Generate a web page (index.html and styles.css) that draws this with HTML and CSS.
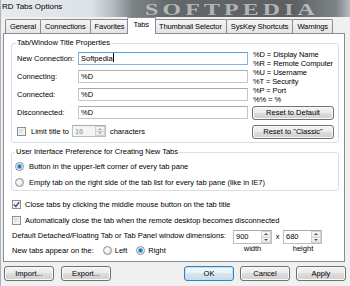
FILE: index.html
```html
<!DOCTYPE html>
<html lang="en">
<head>
    <meta charset="UTF-8">
    <title>RD Tabs Options</title>
    <link rel="stylesheet" href="styles.css">
</head>
<body>
<div class="window">
    <div class="titlebar">
        <span class="title">RD Tabs Options</span>
        <span class="watermark">SOFTPEDIA</span>
    </div>
    <div class="tabs">
        <span class="tab">General</span>
        <span class="tab">Connections</span>
        <span class="tab">Favorites</span>
        <span class="tab current">Tabs</span>
        <span class="tab">Thumbnail Selector</span>
        <span class="tab">SysKey Shortcuts</span>
        <span class="tab">Warnings</span>
    </div>
    <div class="panel">
        <fieldset class="group group-title">
            <legend>Tab/Window Title Properties</legend>
            <div class="title-grid">
                <div class="fields">
                    <div class="field">
                        <label>New Connection:</label>
                        <span class="input focus">Softpedia<i class="caret"></i></span>
                    </div>
                    <div class="field">
                        <label>Connecting:</label>
                        <span class="input">%D</span>
                    </div>
                    <div class="field">
                        <label>Connected:</label>
                        <span class="input">%D</span>
                    </div>
                    <div class="field">
                        <label>Disconnected:</label>
                        <span class="input">%D</span>
                    </div>
                    <div class="limit">
                        <span class="check"></span>
                        <span class="limit-text">Limit title to</span>
                        <span class="spin disabled small">
                            <span class="spin-val">16</span>
                            <span class="spin-btns"><span class="up"></span><span class="down"></span></span>
                        </span>
                        <span class="limit-text">characters</span>
                    </div>
                </div>
                <div class="codes-col">
                    <ul class="codes">
                        <li>%D = Display Name</li>
                        <li>%R = Remote Computer</li>
                        <li>%U = Username</li>
                        <li>%T = Security</li>
                        <li>%P = Port</li>
                        <li>%% = %</li>
                    </ul>
                    <span class="btn wide">Reset to Default</span>
                    <span class="btn wide">Reset to "Classic"</span>
                </div>
            </div>
        </fieldset>

        <fieldset class="group group-pref">
            <legend>User Interface Preference for Creating New Tabs</legend>
            <div class="row"><span class="radio on"></span><span>Button in the upper-left corner of every tab pane</span></div>
            <div class="row"><span class="radio"></span><span>Empty tab on the right side of the tab list for every tab pane (like in IE7)</span></div>
        </fieldset>

        <div class="options">
            <div class="row">
                <span class="check on">
                    <svg width="7" height="7" viewBox="0 0 7 7"><path d="M0.8 3.4 L2.8 5.4 L6.2 1.2" fill="none" stroke="#3c4f8a" stroke-width="1.4"/></svg>
                </span>
                <span>Close tabs by clicking the middle mouse button on the tab title</span>
            </div>
            <div class="row">
                <span class="check"></span>
                <span>Automatically close the tab when the remote desktop becomes disconnected</span>
            </div>
            <div class="dims">
                <span class="dims-text">Default Detached/Floating Tab or Tab Panel window dimensions:</span>
                <span class="spin">
                    <span class="spin-val">900</span>
                    <span class="spin-btns"><span class="up"></span><span class="down"></span></span>
                </span>
                <span class="times">x</span>
                <span class="spin">
                    <span class="spin-val">680</span>
                    <span class="spin-btns"><span class="up"></span><span class="down"></span></span>
                </span>
                <div class="appear">
                    <span>New tabs appear on the:</span>
                    <span class="opt"><span class="radio"></span>Left</span>
                    <span class="opt"><span class="radio on"></span>Right</span>
                </div>
                <span class="dim-label">width</span>
                <span></span>
                <span class="dim-label">height</span>
            </div>
        </div>
    </div>
    <div class="footer">
        <div class="btn-group left">
            <span class="btn">Import...</span>
            <span class="btn">Export...</span>
        </div>
        <div class="btn-group">
            <span class="btn default">OK</span>
            <span class="btn">Cancel</span>
            <span class="btn">Apply</span>
        </div>
    </div>
</div>
</body>
</html>
```

FILE: styles.css
```css
* {
    margin: 0;
    padding: 0;
    box-sizing: border-box;
}

body {
    width: 350px;
    height: 286px;
    overflow: hidden;
    background: #c9d2da;
    font: 7.5px "Liberation Sans", Arial, sans-serif;
    color: #000;
}

.window {
    width: 350px;
    height: 286px;
    background: #f0f0f0;
    border-left: 1px solid #a9b3bb;
}

.titlebar {
    height: 17px;
    position: relative;
    background: linear-gradient(90deg, #e6eaee 0, #dde2e6 90px, #b4babe 112px, #7d8285 132px, #62676a 170px, #5b5f62 290px, #7e8386 335px, #b9bfc4 350px);
}
.title {
    display: block;
    font-size: 8px;
    line-height: 13px;
    padding-left: 1px;
}
.watermark {
    position: absolute;
    left: 144px;
    top: 0;
    font: bold 17px/19px "Liberation Serif", serif;
    letter-spacing: 3px;
    color: rgba(236, 236, 236, 0.6);
    transform: scaleX(1.4);
    transform-origin: left top;
}

.tabs {
    display: flex;
    align-items: flex-end;
    height: 16px;
    padding-left: 4px;
    letter-spacing: -0.1px;
}
.tab {
    height: 14px;
    line-height: 13px;
    padding: 0 4px;
    margin-right: -1px;
    border: 1px solid #898c95;
    border-bottom: none;
    border-radius: 2px 2px 0 0;
    background: linear-gradient(#f4f4f4, #e4e4e4);
    white-space: nowrap;
}
.tab.current {
    height: 17px;
    line-height: 14px;
    margin: 0 -2px -1px -2px;
    padding: 0 6px;
    background: #fff;
    position: relative;
    z-index: 1;
}

.panel {
    margin-left: 2px;
    width: 342px;
    height: 229px;
    border: 1px solid #898c95;
    background: #fff;
    padding: 4px 5px 0 7px;
}

.group {
    border: 1px solid #d5dfe5;
    border-radius: 3px;
}
.group legend {
    line-height: 10px;
    padding: 0 1px;
}
.group-title {
    padding: 4px 4px 3px 5px;
}
.group-title legend {
    margin-left: -1px;
}

.title-grid {
    display: grid;
    grid-template-columns: 231px 82px;
    column-gap: 4px;
}
.fields {
    display: flex;
    flex-direction: column;
    gap: 5px;
}
.field {
    display: grid;
    grid-template-columns: 61px 170px;
    height: 13px;
    line-height: 13px;
}
.input {
    border: 1px solid #c3c8cd;
    border-top-color: #a6abb0;
    line-height: 11px;
    padding-left: 2px;
    background: #fff;
}
.input.focus {
    border-color: #7eb4ea;
    border-top-color: #569de5;
}
.caret {
    display: inline-block;
    width: 1px;
    height: 9px;
    background: #000;
    vertical-align: -1px;
}

.limit {
    display: flex;
    align-items: center;
    height: 12px;
    margin-top: 1px;
}
.limit-text {
    margin-left: 5px;
}
.limit .spin {
    margin-left: 3px;
}
.limit .spin + .limit-text {
    margin-left: 4px;
}

.codes-col {
    display: flex;
    flex-direction: column;
    margin-top: -2px;
}
.codes {
    list-style: none;
    padding-left: 1px;
    line-height: 9px;
    margin-bottom: 2px;
    white-space: nowrap;
    letter-spacing: -0.1px;
}
.codes-col .btn + .btn {
    margin-top: 5px;
}

.spin {
    display: flex;
    width: 39px;
    height: 14px;
    border: 1px solid #b9bec3;
    border-top-color: #a6abb0;
    background: #fff;
}
.spin.small {
    width: 34px;
    height: 12px;
}
.spin-val {
    flex: 1;
    padding-left: 2px;
    line-height: 11px;
}
.spin.disabled {
    background: #f4f4f4;
    color: #8d8d8d;
}
.spin-btns {
    width: 10px;
    display: flex;
    flex-direction: column;
}
.spin-btns span {
    flex: 1;
    display: flex;
    align-items: center;
    justify-content: center;
    border: 1px solid #d2d2d2;
    background: linear-gradient(#f8f8f8, #e6e6e6);
}
.spin-btns span + span {
    border-top: none;
}
.up::before {
    content: "";
    border-left: 2px solid transparent;
    border-right: 2px solid transparent;
    border-bottom: 2px solid #555;
}
.down::before {
    content: "";
    border-left: 2px solid transparent;
    border-right: 2px solid transparent;
    border-top: 2px solid #555;
}
.disabled .up::before {
    border-bottom-color: #aaa;
}
.disabled .down::before {
    border-top-color: #aaa;
}

.check {
    display: inline-flex;
    align-items: center;
    justify-content: center;
    width: 9px;
    height: 9px;
    flex: none;
    border: 1px solid #8e8f8f;
    background: linear-gradient(135deg, #d0d4d9, #f6f6f6);
    box-shadow: inset 0 0 0 1px #f4f4f4;
}
.check.on {
    background: linear-gradient(135deg, #e6e9ec, #fafafa);
}
.radio {
    display: inline-block;
    width: 9px;
    height: 9px;
    flex: none;
    border: 1px solid #8e8f8f;
    border-radius: 50%;
    background: radial-gradient(circle at 40% 40%, #fff 0, #e4e6e8 60%, #c9cdd1 100%);
}
.radio.on {
    background: radial-gradient(circle, #12579c 0, #2f86cb 1.4px, #8fcdf0 2.4px, #eef4f8 3px, #d5d9dd 100%);
}

.group-pref {
    margin-top: 4px;
    padding: 3px 3px 2px 3px;
}
.row {
    display: flex;
    align-items: center;
    gap: 5px;
    height: 12px;
}
.group-pref .row + .row {
    margin-top: 4px;
}

.options {
    margin: 7px 0 0 1px;
}
.options .row {
    gap: 4px;
}
.options .row + .row {
    margin-top: 4px;
}
.dims {
    display: grid;
    grid-template-columns: 221px 39px 11px 40px;
    grid-template-rows: 14px 12px;
    margin-top: 4px;
}
.dims-text {
    line-height: 12px;
}
.times {
    text-align: center;
    line-height: 13px;
}
.appear {
    display: flex;
    align-items: center;
    margin-top: 1px;
}
.opt {
    display: flex;
    align-items: center;
    gap: 3px;
    margin-left: 9px;
}
.dim-label {
    text-align: center;
    line-height: 9px;
}

.btn {
    display: block;
    height: 14px;
    line-height: 12px;
    text-align: center;
    border: 1px solid #707070;
    border-radius: 3px;
    background: linear-gradient(#f3f3f3 0, #ebebeb 50%, #dddddd 50%, #cfcfcf 100%);
    box-shadow: inset 0 0 0 1px #fafafa;
}
.btn.wide {
    width: 82px;
}
.btn.default {
    border-color: #3c7fb1;
    box-shadow: inset 0 0 0 1px #b7e4f8;
    background: linear-gradient(#f2f8fb 0, #e8f2f7 50%, #d8e6ee 50%, #cbdbe4 100%);
}

.footer {
    display: flex;
    justify-content: space-between;
    padding: 4px 4px 0 3px;
}
.btn-group {
    display: flex;
    gap: 6px;
}
.btn-group.left {
    gap: 7px;
}
.footer .btn {
    width: 50px;
    height: 15px;
    line-height: 13px;
}
```
